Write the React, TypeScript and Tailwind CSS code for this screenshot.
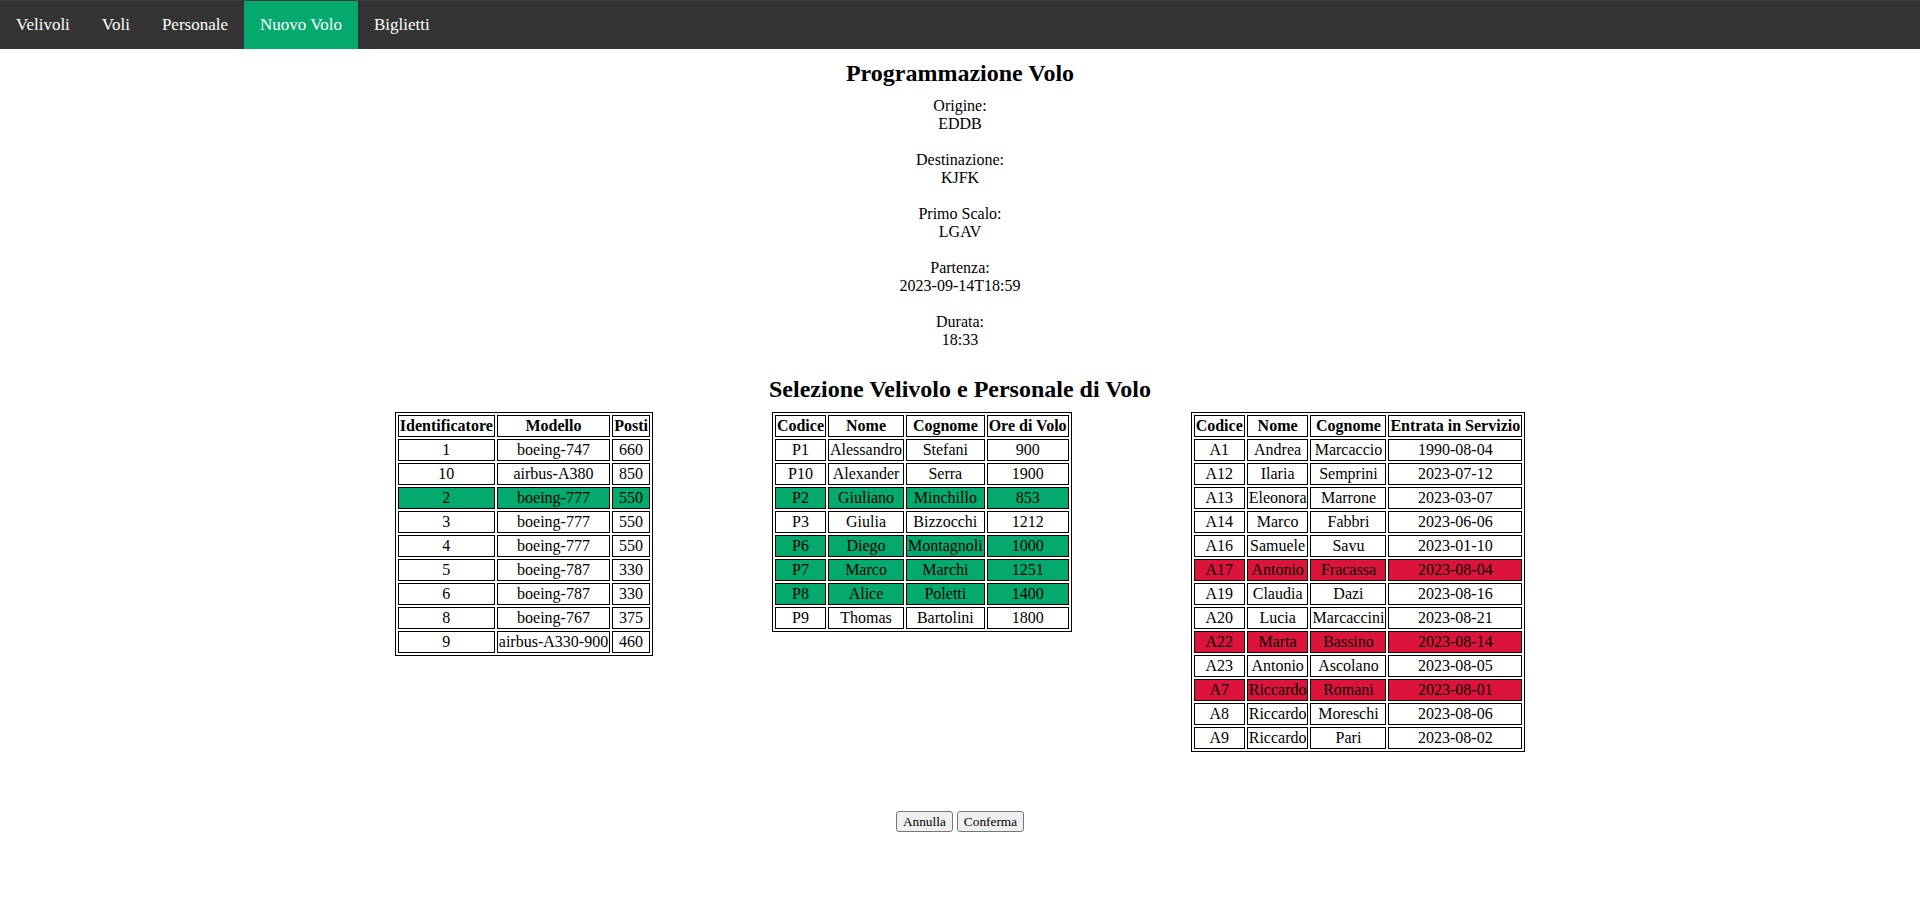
import React from "react";

const velivoli = [
  { id: "1", modello: "boeing-747", posti: "660" },
  { id: "10", modello: "airbus-A380", posti: "850" },
  { id: "2", modello: "boeing-777", posti: "550", sel: true },
  { id: "3", modello: "boeing-777", posti: "550" },
  { id: "4", modello: "boeing-777", posti: "550" },
  { id: "5", modello: "boeing-787", posti: "330" },
  { id: "6", modello: "boeing-787", posti: "330" },
  { id: "8", modello: "boeing-767", posti: "375" },
  { id: "9", modello: "airbus-A330-900", posti: "460" },
];

const piloti = [
  { c: "P1", n: "Alessandro", s: "Stefani", o: "900" },
  { c: "P10", n: "Alexander", s: "Serra", o: "1900" },
  { c: "P2", n: "Giuliano", s: "Minchillo", o: "853", sel: true },
  { c: "P3", n: "Giulia", s: "Bizzocchi", o: "1212" },
  { c: "P6", n: "Diego", s: "Montagnoli", o: "1000", sel: true },
  { c: "P7", n: "Marco", s: "Marchi", o: "1251", sel: true },
  { c: "P8", n: "Alice", s: "Poletti", o: "1400", sel: true },
  { c: "P9", n: "Thomas", s: "Bartolini", o: "1800" },
];

const assistenti = [
  { c: "A1", n: "Andrea", s: "Marcaccio", d: "1990-08-04" },
  { c: "A12", n: "Ilaria", s: "Semprini", d: "2023-07-12" },
  { c: "A13", n: "Eleonora", s: "Marrone", d: "2023-03-07" },
  { c: "A14", n: "Marco", s: "Fabbri", d: "2023-06-06" },
  { c: "A16", n: "Samuele", s: "Savu", d: "2023-01-10" },
  { c: "A17", n: "Antonio", s: "Fracassa", d: "2023-08-04", bad: true },
  { c: "A19", n: "Claudia", s: "Dazi", d: "2023-08-16" },
  { c: "A20", n: "Lucia", s: "Marcaccini", d: "2023-08-21" },
  { c: "A22", n: "Marta", s: "Bassino", d: "2023-08-14", bad: true },
  { c: "A23", n: "Antonio", s: "Ascolano", d: "2023-08-05" },
  { c: "A7", n: "Riccardo", s: "Romani", d: "2023-08-01", bad: true },
  { c: "A8", n: "Riccardo", s: "Moreschi", d: "2023-08-06" },
  { c: "A9", n: "Riccardo", s: "Pari", d: "2023-08-02" },
];

const info = [
  ["Origine:", "EDDB"],
  ["Destinazione:", "KJFK"],
  ["Primo Scalo:", "LGAV"],
  ["Partenza:", "2023-09-14T18:59"],
  ["Durata:", "18:33"],
];

const navItems = ["Velivoli", "Voli", "Personale", "Nuovo Volo", "Biglietti"];

const th = "border border-black px-[1px] py-[1px] leading-[18px] text-center font-bold";
const td = "border border-black px-[1px] py-[1px] leading-[18px] text-center font-normal";

function rowBg(kind?: "sel" | "bad") {
  if (kind === "sel") return "bg-[#04AA6D]";
  if (kind === "bad") return "bg-[#DC143C]";
  return "";
}

function DataTable({ head, rows }: { head: string[]; rows: { cells: string[]; kind?: "sel" | "bad" }[] }) {
  return (
    <table className="border-separate border-spacing-[2px] border border-black">
      <thead>
        <tr>
          {head.map((h) => (
            <th key={h} className={th}>{h}</th>
          ))}
        </tr>
      </thead>
      <tbody>
        {rows.map((r, i) => (
          <tr key={i}>
            {r.cells.map((c, j) => (
              <td key={j} className={`${td} ${rowBg(r.kind)}`}>{c}</td>
            ))}
          </tr>
        ))}
      </tbody>
    </table>
  );
}

export default function App() {
  return (
    <div className="min-h-[902px] bg-white text-black text-[16px] font-['Liberation_Serif','Times_New_Roman',serif]">
      {/* Navbar */}
      <nav className="flex h-[49px] bg-[#333333] border-t border-[#3d3d3d]">
        {navItems.map((item) => (
          <a
            key={item}
            className={`flex items-center px-4 text-[17px] leading-[20px] text-white ${item === "Nuovo Volo" ? "bg-[#04AA6D]" : ""}`}
          >
            {item}
          </a>
        ))}
      </nav>

      {/* Info volo */}
      <div className="text-center">
        <h2 className="mt-[10px] mb-[10px] text-[24px] leading-[28px] font-bold">Programmazione Volo</h2>
        {info.map(([label, value]) => (
          <div key={label} className="mb-[18px] leading-[18px]">
            <div>{label}</div>
            <div>{value}</div>
          </div>
        ))}
        <h2 className="mt-[26px] mb-[9px] text-[24px] leading-[28px] font-bold">
          Selezione Velivolo e Personale di Volo
        </h2>
      </div>

      {/* Tabelle */}
      <div className="flex justify-center items-start gap-[119px]">
        <DataTable
          head={["Identificatore", "Modello", "Posti"]}
          rows={velivoli.map((v) => ({ cells: [v.id, v.modello, v.posti], kind: v.sel ? "sel" : undefined }))}
        />
        <DataTable
          head={["Codice", "Nome", "Cognome", "Ore di Volo"]}
          rows={piloti.map((p) => ({ cells: [p.c, p.n, p.s, p.o], kind: p.sel ? "sel" : undefined }))}
        />
        <DataTable
          head={["Codice", "Nome", "Cognome", "Entrata in Servizio"]}
          rows={assistenti.map((a) => ({ cells: [a.c, a.n, a.s, a.d], kind: a.bad ? "bad" : undefined }))}
        />
      </div>

      {/* Azioni */}
      <div className="flex justify-center gap-[4px] mt-[59px]">
        <button className="px-[6px] py-[2px] text-[13.33px] leading-[15px] bg-[#efefef] border border-[#767676] rounded-[3px]">
          Annulla
        </button>
        <button className="px-[6px] py-[2px] text-[13.33px] leading-[15px] bg-[#efefef] border border-[#767676] rounded-[3px]">
          Conferma
        </button>
      </div>
    </div>
  );
}
